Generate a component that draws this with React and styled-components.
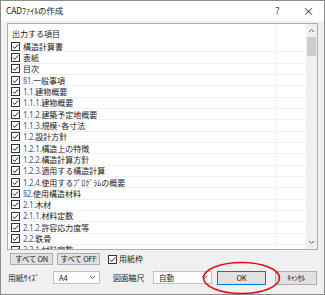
import styled, { createGlobalStyle } from "styled-components"

const GlobalStyle = createGlobalStyle`
    html, body {
        margin: 0;
        padding: 0;
        background: #ffffff;
    }
    * {
        box-sizing: border-box;
    }
`

const FONT = `"Noto Sans CJK JP", "Noto Sans", sans-serif`
const LATIN = `"Noto Sans", "Noto Sans CJK JP", sans-serif`

const Window = styled.div`
    width: 325px;
    height: 295px;
    border: 1px solid #8c8c8c;
    display: flex;
    flex-direction: column;
    font-family: ${FONT};
    line-height: 1.15;
    color: #1a1a1a;
    background: #f0f0f0;
`
const TitleBar = styled.div`
    height: 20px;
    background: #ffffff;
    display: flex;
    align-items: center;
    padding-left: 5px;
`
const Title = styled.div`
    flex: 1;
    font-size: 8.5px;
    letter-spacing: -0.2px;
    color: #222;
`
const TitleButton = styled.div`
    width: 31px;
    text-align: center;
    font-size: ${(p) => p.$size || 9}px;
    color: #333;
`
const Body = styled.div`
    flex: 1;
    padding: 2px 6px 0 6px;
    display: flex;
    flex-direction: column;
`
const ListBox = styled.div`
    height: 227px;
    border: 1px solid #adadad;
    background: #ffffff;
    display: flex;
    overflow: hidden;
`
const ListArea = styled.div`
    flex: 1;
    overflow: hidden;
`
const HeaderRow = styled.div`
    height: 17px;
    display: flex;
`
const Row = styled.div`
    height: 11.33px;
    display: flex;
    border-bottom: 1px solid #f0f0f0;
`
const Cell = styled.div`
    flex: 1;
    display: flex;
    align-items: center;
    gap: 3px;
    padding-left: ${(p) => (p.$header ? 4 : 3)}px;
    padding-top: ${(p) => (p.$header ? 2 : 0)}px;
    font-size: 8px;
    white-space: nowrap;
    overflow: hidden;
`
const SideCell = styled.div`
    width: 30px;
    border-left: 1px solid #f0f0f0;
`
const Num = styled.span`
    font-family: ${LATIN};
    font-size: 8px;
    color: #44598a;
    letter-spacing: -0.3px;
`
const ScrollBar = styled.div`
    width: 11px;
    background: #f0f0f0;
    display: flex;
    flex-direction: column;
    align-items: center;
`
const Arrow = styled.div`
    height: 13px;
    display: flex;
    align-items: center;
    justify-content: center;
`
const Thumb = styled.div`
    width: 9px;
    height: 19px;
    background: #cdcdcd;
`
const Track = styled.div`
    flex: 1;
`
const ActionRow = styled.div`
    margin-top: 3px;
    height: 12px;
    display: flex;
    align-items: center;
    padding-left: 3px;
`
const Button = styled.div`
    width: ${(p) => p.$w}px;
    height: ${(p) => p.$h || 12}px;
    margin-right: ${(p) => p.$mr || 0}px;
    background: #e1e1e1;
    border: 1px solid ${(p) => (p.$focus ? "#0078d7" : "#adadad")};
    display: flex;
    align-items: center;
    justify-content: center;
    font-size: 7.5px;
    line-height: 1;
    letter-spacing: -0.2px;
    white-space: nowrap;
`
const CheckLabel = styled.div`
    display: flex;
    align-items: center;
    gap: 2px;
    font-size: 8px;
    line-height: 1;
    margin-left: 8px;
`
const SettingRow = styled.div`
    margin-top: 5px;
    height: 15px;
    display: flex;
    align-items: center;
    padding-left: 1px;
`
const Label = styled.div`
    width: ${(p) => p.$w}px;
    font-size: 8px;
    white-space: nowrap;
    letter-spacing: -0.2px;
`
const Select = styled.div`
    width: ${(p) => p.$w}px;
    height: 13px;
    margin-right: ${(p) => p.$mr || 5}px;
    background: #fcfcfc;
    border: 1px solid #c2c2c2;
    display: flex;
    align-items: center;
    justify-content: space-between;
    padding: 0 3px 0 5px;
    font-size: 7.5px;
    line-height: 1;
`
const OkWrap = styled.div`
    position: relative;
    margin-right: 9px;
`
const Ring = styled.svg`
    position: absolute;
    left: -15px;
    top: -10px;
    pointer-events: none;
`

const Check = () => (
    <svg width="9" height="9" viewBox="0 0 9 9">
        <rect x="0.5" y="0.5" width="8" height="8" fill="#fff" stroke="#333" />
        <path d="M1.8 4.6 L3.7 6.4 L7.2 2.4" fill="none" stroke="#222" strokeWidth="1" />
    </svg>
)

const Chevron = ({ up }) => (
    <svg width="7" height="5" viewBox="0 0 7 5">
        <path d={up ? "M1 4 L3.5 1.5 L6 4" : "M1 1 L3.5 3.5 L6 1"} fill="none" stroke="#606060" strokeWidth="1" />
    </svg>
)

const items = [
    ["", "構造計算書"],
    ["", "表紙"],
    ["", "目次"],
    ["§1.", "一般事項"],
    ["1.1.", "建物概要"],
    ["1.1.1.", "建物概要"],
    ["1.1.2.", "建築予定地概要"],
    ["1.1.3.", "規模･各寸法"],
    ["1.2.", "設計方針"],
    ["1.2.1.", "構造上の特徴"],
    ["1.2.2.", "構造計算方針"],
    ["1.2.3.", "適用する構造計算"],
    ["1.2.4.", "使用するﾌﾟﾛｸﾞﾗﾑの概要"],
    ["§2.", "使用構造材料"],
    ["2.1.", "木材"],
    ["2.1.1.", "材料定数"],
    ["2.1.2.", "許容応力度等"],
    ["2.2.", "鉄骨"],
    ["2.2.1.", "材料定数"],
]

const App = () => {
    return (
        <>
            <GlobalStyle />
            <Window>
                <TitleBar>
                    <Title>CADﾌｧｲﾙの作成</Title>
                    <TitleButton>?</TitleButton>
                    <TitleButton $size={11}>×</TitleButton>
                </TitleBar>
                <Body>
                    <ListBox>
                        <ListArea>
                            <HeaderRow>
                                <Cell $header>出力する項目</Cell>
                                <SideCell />
                            </HeaderRow>
                            {items.map(([num, text], i) => (
                                <Row key={i}>
                                    <Cell>
                                        <Check />
                                        <span>
                                            {num && <Num>{num}</Num>}
                                            {text}
                                        </span>
                                    </Cell>
                                    <SideCell />
                                </Row>
                            ))}
                        </ListArea>
                        <ScrollBar>
                            <Arrow><Chevron up /></Arrow>
                            <Thumb />
                            <Track />
                            <Arrow><Chevron /></Arrow>
                        </ScrollBar>
                    </ListBox>
                    <ActionRow>
                        <Button $w={43} $mr={4}>すべて ON</Button>
                        <Button $w={43}>すべて OFF</Button>
                        <CheckLabel>
                            <Check />
                            用紙枠
                        </CheckLabel>
                    </ActionRow>
                    <SettingRow>
                        <Label $w={45}>用紙ｻｲｽﾞ</Label>
                        <Select $w={47} $mr={13}>
                            A4
                            <Chevron />
                        </Select>
                        <Label $w={40}>図面縮尺</Label>
                        <Select $w={59}>
                            自動
                            <Chevron />
                        </Select>
                        <OkWrap>
                            <Button $w={49} $h={14} $focus>OK</Button>
                            <Ring width="79" height="34" viewBox="0 0 79 34">
                                <ellipse cx="39.5" cy="17" rx="38" ry="15.5" fill="none" stroke="#e01010" strokeWidth="1.6" />
                            </Ring>
                        </OkWrap>
                        <Button $w={42} $h={14}>ｷｬﾝｾﾙ</Button>
                    </SettingRow>
                </Body>
            </Window>
        </>
    )
}

export default App
